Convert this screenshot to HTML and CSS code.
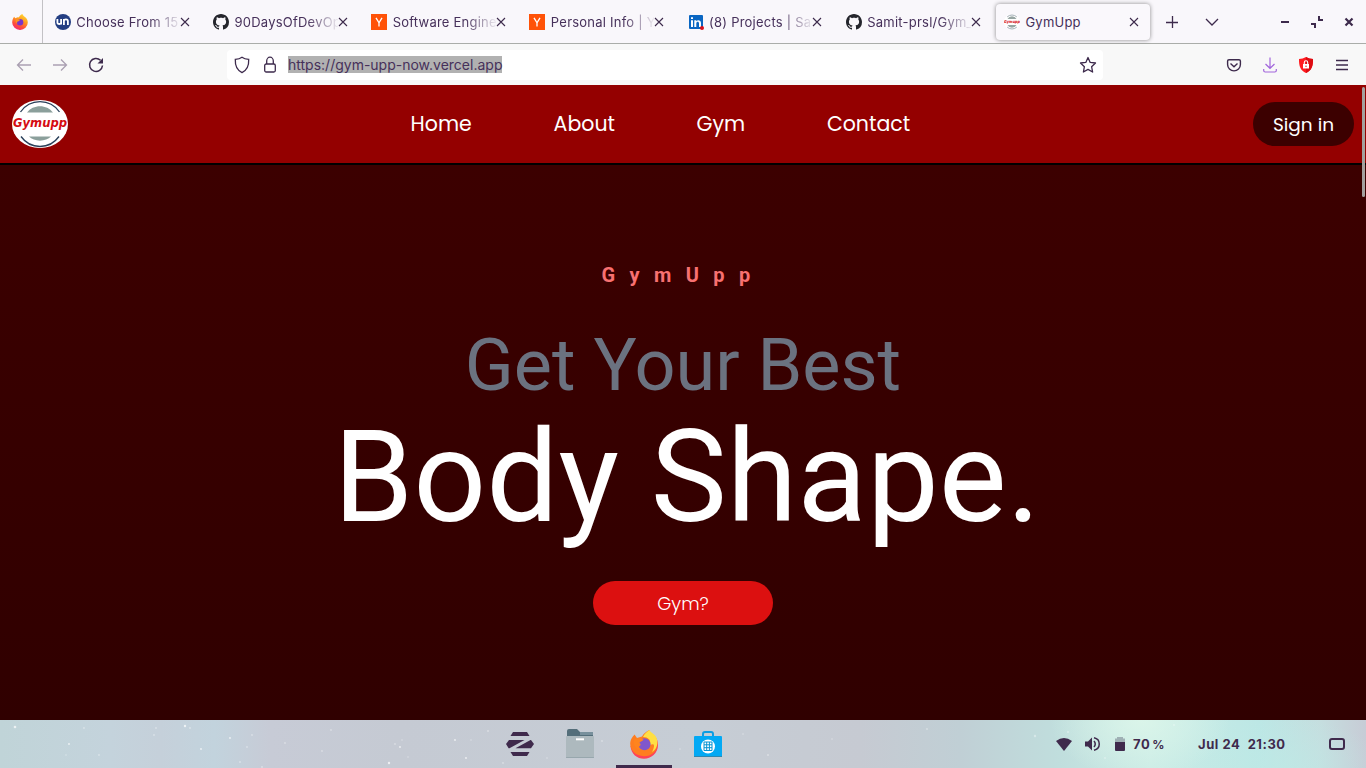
FILE: index.html
```html
<!DOCTYPE html>
<html lang="en">
<head>
<meta charset="utf-8">
<title>GymUpp</title>
<link rel="stylesheet" href="styles.css">
</head>
<body>
<svg class="defs" width="0" height="0">
  <defs>
    <linearGradient id="ff-body" x1=".8" y1="0" x2=".3" y2="1">
      <stop offset="0" stop-color="#ffe03a"/><stop offset=".4" stop-color="#ff9a1e"/><stop offset=".75" stop-color="#ff4a3c"/><stop offset="1" stop-color="#f0277a"/>
    </linearGradient>
    <symbol id="close" viewBox="0 0 10 10"><path d="M1 1l8 8M9 1L1 9" fill="none" stroke="#3d2a4c" stroke-width="1.1"/></symbol>
    <symbol id="github" viewBox="0 0 16 16"><path fill="#24252c" d="M8 0C3.58 0 0 3.58 0 8c0 3.54 2.29 6.53 5.47 7.59.4.07.55-.17.55-.38 0-.19-.01-.82-.01-1.49-2.01.37-2.53-.49-2.69-.94-.09-.23-.48-.94-.82-1.13-.28-.15-.68-.52-.01-.53.63-.01 1.08.58 1.23.82.72 1.21 1.87.87 2.33.66.07-.52.28-.87.51-1.07-1.78-.2-3.64-.89-3.64-3.95 0-.87.31-1.59.82-2.15-.08-.2-.36-1.02.08-2.12 0 0 .67-.21 2.2.82.64-.18 1.32-.27 2-.27s1.36.09 2 .27c1.53-1.04 2.2-.82 2.2-.82.44 1.1.16 1.92.08 2.12.51.56.82 1.27.82 2.15 0 3.07-1.87 3.75-3.65 3.95.29.25.54.73.54 1.48 0 1.07-.01 1.93-.01 2.2 0 .21.15.46.55.38A8.01 8.01 0 0 0 16 8c0-4.42-3.58-8-8-8z"/></symbol>
    <symbol id="ycomb" viewBox="0 0 16 16"><path fill="#ff5207" d="M0 0h16v16H0z"/><path d="M5 3.800L8 8.800l3-5M8 8.600v4" fill="none" stroke="#fff" stroke-width="1.300"/></symbol>
  </defs>
</svg>

<div class="tabbar">
  <div class="pinned">
    <svg width="16" height="16" viewBox="0 0 16 16"><path fill="url(#ff-body)" d="M10.400 0c.4 1.500 1.700 2.200 2.600 3 1.600 1.100 2.800 3.100 2.800 5.400A7.700 7.700 0 0 1 8 16 7.700 7.700 0 0 1 .2 8.400C.2 6 1 4.100 2.300 2.800l.8 1.500 2-.7c.5-.3 1.200-.3 1.700-.2C7.700 1.900 9 .4 10.400 0z"/><circle cx="8" cy="8.200" r="3.300" fill="#7a35c8"/><path d="M3.800 5.300c1.500-.6 2.500.2 4.500.5l-1.600 1.500C5 7.300 4.800 8.500 5.400 9.700 3.800 9 3.300 7 3.800 5.300z" fill="#ff941f"/></svg>
  </div>
  <div class="tab">
    <svg class="fav" viewBox="0 0 16 16"><circle cx="8" cy="8" r="8" fill="#243e82"/><path d="M2.400 5v3.500c0 2 3.700 2 3.700 0V5v5.500M8.900 11V5v2c0-2.300 4-2.300 4 0v4" fill="none" stroke="#fff" stroke-width="1.800"/></svg>
    <span class="title fade">Choose From 15</span><svg class="x"><use href="#close"/></svg>
  </div>
  <div class="tab"><svg class="fav"><use href="#github"/></svg><span class="title fade">90DaysOfDevOps</span><svg class="x"><use href="#close"/></svg></div>
  <div class="tab"><svg class="fav"><use href="#ycomb"/></svg><span class="title fade">Software Engineer</span><svg class="x"><use href="#close"/></svg></div>
  <div class="tab"><svg class="fav"><use href="#ycomb"/></svg><span class="title fade">Personal Info | Y</span><svg class="x"><use href="#close"/></svg></div>
  <div class="tab">
    <svg class="fav" viewBox="0 0 16 16"><rect x="1" y="1" width="14" height="14" rx="1" fill="#0a66c2"/><path d="M3 6.200h2V13H3zM3 3.300h2v1.800H3zM6.300 6.200h2v1C9.500 5.500 13 5.700 13 9v4h-2V9.500c0-2.300-2.700-2.200-2.700 0V13h-2z" fill="#fff"/><circle cx="14" cy="14" r="2" fill="#d8121b"/></svg>
    <span class="title fade">(8) Projects | Sam</span><svg class="x"><use href="#close"/></svg>
  </div>
  <div class="tab"><svg class="fav"><use href="#github"/></svg><span class="title fade">Samit-prsl/Gym_</span><svg class="x"><use href="#close"/></svg></div>
  <div class="tab active">
    <svg class="fav" viewBox="0 0 16 16"><circle cx="8" cy="8" r="8" fill="#fff"/><path d="M3.200 2.900a7 7 0 0 1 9.600 0M3.200 13.100a7 7 0 0 0 9.600 0" fill="none" stroke="#a3adb6"/><path d="M3.500 5a5 5 0 0 1 9 0zM3.500 11a5 5 0 0 0 9 0z" fill="#97a5a3"/><text x="0" y="9.100" font-size="4" textLength="16" lengthAdjust="spacingAndGlyphs" class="logo-text">Gymupp</text></svg>
    <span class="title">GymUpp</span><svg class="x"><use href="#close"/></svg>
  </div>
  <div class="tab-tools">
    <svg width="14" height="14" viewBox="0 0 14 14" class="line"><path d="M7.500 1v12M1 7.500h12"/></svg>
    <svg width="14" height="14" viewBox="0 0 14 14" class="line"><path d="M1 4l6 6 6-6"/></svg>
  </div>
  <div class="window-tools">
    <svg width="10" height="12" viewBox="0 0 10 12"><path d="M1 5h8v2H1z" fill="#3d2a4c"/></svg>
    <svg width="12" height="12" viewBox="0 0 12 12"><path d="M7 0h2v3h3v2H7zM0 7h5v5H3V9H0z" fill="#3d2a4c"/></svg>
    <svg width="10" height="12" viewBox="0 0 10 12"><path d="M1.500 2.500l7 7M8.500 2.500l-7 7" stroke="#3d2a4c" stroke-width="2.200"/></svg>
  </div>
</div>

<div class="toolbar">
  <div class="nav-tools">
    <svg width="16" height="16" viewBox="0 0 16 16" class="line dim"><path d="M15 8H1.500M7 2.500L1.500 8 7 13.500"/></svg>
    <svg width="16" height="16" viewBox="0 0 16 16" class="line dim"><path d="M1 8h13.500M9 2.500L14.500 8 9 13.500"/></svg>
    <svg width="16" height="16" viewBox="0 0 16 16" class="line"><path stroke-width="1.500" d="M12.500 3.200A6.500 6.500 0 1 0 14.500 8.500"/><path d="M15 1v5.500H9.500z" fill="#3d2a4c" stroke="none"/></svg>
  </div>
  <div class="urlbar">
    <svg width="16" height="18" viewBox="0 0 16 18" class="line"><path stroke-width="1.300" d="M8 1.200C6.300 2.500 4 3.200 1.300 3.400 1 9.500 2.500 14 8 16.600 13.500 14 15 9.500 14.700 3.400 12 3.200 9.700 2.500 8 1.200z"/></svg>
    <svg width="14" height="18" viewBox="0 0 14 18" class="line lock"><rect x="1.700" y="8" width="10.600" height="8" rx="1.500" stroke-width="1.300"/><path stroke-width="1.300" d="M3.700 8V5a3.300 3.800 0 0 1 6.600 0v3"/></svg>
    <span class="url">https://gym-upp-now.vercel.app</span>
    <svg width="18" height="18" viewBox="0 0 18 18" class="line star"><path stroke-width="1.300" stroke-linejoin="round" d="M9 1.500l2.200 4.900 5.300.6-3.900 3.700 1 5.300L9 13.400 4.400 16l1-5.300L1.500 7l5.300-.6z"/></svg>
  </div>
  <div class="right-tools">
    <svg width="16" height="16" viewBox="0 0 16 16" class="line"><path stroke-width="1.400" d="M3 2.700h10q1.400 0 1.400 1.400v3.400a6.400 6.400 0 0 1-12.800 0V4.100Q1.600 2.700 3 2.700zM4.500 6.500L8 9.700l3.500-3.200"/></svg>
    <svg width="16" height="16" viewBox="0 0 16 16" class="line purple"><path stroke-width="1.200" d="M8 .500v10.500M3.500 7L8 11.300 12.500 7M1.700 12v1.500q0 1.500 1.500 1.500h9.600q1.500 0 1.500-1.500V12"/></svg>
    <svg width="16" height="16" viewBox="0 0 16 16"><path d="M8 0c2 1.300 4.500 1.800 7 1.900C15.200 9 13.500 13.500 8 16 2.500 13.500.8 9 1 1.900 3.500 1.800 6 1.300 8 0z" fill="#ff1a1f"/><path d="M8 0c2 1.300 4.500 1.800 7 1.900C15.200 9 13.500 13.500 8 16z" fill="#dd0c12"/><path d="M5 7h6v4.500H5z" fill="#fff"/><path d="M6.300 7V5.500a1.700 1.700 0 0 1 3.400 0V7" fill="none" stroke="#fff" stroke-width="1.100"/><circle cx="8" cy="9.200" r=".7" fill="#e00e14"/></svg>
    <svg width="16" height="16" viewBox="0 0 16 16" class="line"><path d="M2 3.500h12M2 8h12M2 12.500h12" stroke-width="1.300"/></svg>
  </div>
</div>

<div class="page">
  <header class="site-header">
    <svg class="logo" width="56" height="48" viewBox="0 0 56 48">
      <ellipse cx="28" cy="24" rx="28" ry="24" fill="#fff"/>
      <path d="M8.500 12C18-1.800 38-1.800 47.500 12M9 36.500c9.500 13.300 28.500 13.300 38 0" fill="none" stroke="#293f59" stroke-width="1.300"/>
      <path d="M15 12.500c6-8.500 20-8.500 26 0zM17 36.500c5 5.500 17 5.500 22 0z" fill="#8b9f9b"/>
      <text x="1" y="27.300" font-size="11.500" textLength="54" lengthAdjust="spacingAndGlyphs" class="logo-text">Gymupp</text>
    </svg>
    <nav class="site-nav"><a class="n1">Home</a><a class="n2">About</a><a class="n3">Gym</a><a class="n4">Contact</a></nav>
    <button class="signin">Sign in</button>
    <div class="scroll-thumb"></div>
  </header>
  <main class="hero">
    <p class="brand">GymUpp</p>
    <h2 class="lead">Get Your Best</h2>
    <h1 class="headline">Body Shape.</h1>
    <button class="cta">Gym?</button>
  </main>
</div>

<footer class="taskbar">
  <svg class="sparkles" width="1366" height="48" viewBox="0 0 1366 48" fill="#fff">
    <g opacity=".7"><circle cx="15" cy="7" r="1.300"/><circle cx="185" cy="6" r="1.200"/><circle cx="69" cy="24" r=".9"/><circle cx="201" cy="29" r=".9"/><circle cx="230" cy="18" r=".9"/><circle cx="400" cy="27" r=".9"/><circle cx="389" cy="43" r="1.200"/><circle cx="455" cy="20" r=".9"/><circle cx="466" cy="38" r=".9"/><circle cx="488" cy="11" r=".7"/></g>
    <g opacity=".35"><circle cx="84" cy="8" r=".9"/><circle cx="99" cy="35" r=".9"/><circle cx="66" cy="35" r=".8"/><circle cx="156" cy="8" r=".9"/><circle cx="190" cy="8" r="1"/><circle cx="154" cy="15" r=".9"/><circle cx="247" cy="27" r=".9"/><circle cx="252" cy="15" r=".9"/><circle cx="240" cy="42" r="1"/><circle cx="262" cy="47" r="1"/><circle cx="285" cy="23" r=".9"/><circle cx="322" cy="31" r=".9"/><circle cx="331" cy="10" r=".9"/><circle cx="395" cy="24" r=".9"/><circle cx="402" cy="20" r=".8"/><circle cx="408" cy="37" r=".8"/><circle cx="471" cy="20" r=".8"/><circle cx="503" cy="43" r=".9"/><circle cx="547" cy="38" r=".8"/><circle cx="602" cy="21" r=".9"/><circle cx="680" cy="29" r=".8"/><circle cx="743" cy="14" r=".8"/><circle cx="768" cy="35" r="1"/><circle cx="832" cy="19" r=".8"/><circle cx="927" cy="9" r=".9"/><circle cx="1035" cy="16" r="1.200"/><circle cx="1068" cy="12" r="1"/><circle cx="1174" cy="5" r=".9"/><circle cx="1105" cy="38" r=".9"/></g>
  </svg>
  <div class="launcher">
    <div class="app"><svg width="28" height="24" viewBox="0 0 28 24"><path fill="#3f2a4c" d="M7 0h14l2.500 4h-19zM4.500 20h19L21 24H7zM3 8h15.500L3.500 16.200H2.600L0 12zM25 8l3 4-3 4.200H9.500L24.500 8z"/></svg></div>
    <div class="app"><svg width="28" height="30" viewBox="0 0 28 30"><path d="M1 2q0-2 2-2h8l3 3h13v6H1z" fill="#546e7a"/><path d="M14 3h13v3H14z" fill="#78909c"/><rect y="7" width="28" height="22" rx="1" fill="#adb9be"/><rect y="28.300" width="28" height=".7" fill="#8fa0a7"/><rect x="10" y="9.300" width="8" height="2" fill="#fff"/></svg></div>
    <div class="app running"><svg width="28" height="29" viewBox="0 0 28 29"><path d="M.5 16C1 24 7 28.800 14 28.800S28 23 28 15c0-4-1-6-3-8z" fill="#ff4258"/><path d="M4.500 4.500L7 8l5-1.500C14 3 16 2 19.500 0c0 4 6 6 7.500 12 1.500 8-4.500 14.200-13 14.200S0 20 .2 13.500C.5 9 2.500 7 4.500 4.500z" fill="#ff7d20"/><path d="M19.500 0c-3 2-5.500 4-6.500 7 7 0 8 5 7 8 6-3 4 3 2 7 6-3 7.500-13 2-17.500C22 2.500 20 2 19.500 0z" fill="#ffdf43"/><circle cx="14.500" cy="14.300" r="6" fill="#8057cc"/><path d="M4.500 9c3-1.500 6-.5 9 .5 0 1.500-4 2-4 3.500 2 1 1 3-1 4l2 3C5 19 2.500 13 4.500 9z" fill="#ff841e"/></svg></div>
    <div class="app"><svg width="28" height="27" viewBox="0 0 28 27"><path d="M9 6V3q0-2 2-2h6q2 0 2 2v3" fill="none" stroke="#0c9de2" stroke-width="2"/><rect y="5" width="28" height="21" rx="1" fill="#03a9f4"/><rect y="25" width="28" height="1" fill="#2f88b0"/><circle cx="14" cy="15.500" r="7" fill="#fff"/><path d="M10 11h8v8.500h-8zM10 13.800h8M10 16.700h8M12.700 11v8.500M15.400 11v8.500" fill="none" stroke="#0794d3"/></svg></div>
  </div>
  <div class="status">
    <svg width="16" height="13" viewBox="0 0 16 13"><path d="M0 3Q8-3 16 3L8 13z" fill="#3f2a4c"/></svg>
    <svg class="vol" width="16" height="14" viewBox="0 0 16 14"><path d="M0 4.500h3L7 .5v13l-4-4H0z" fill="#3f2a4c"/><path d="M9 4q2.500 3 0 6M9 .8c7 1.500 7 10.900 0 12.400" fill="none" stroke="#3f2a4c" stroke-width="1.500"/></svg>
    <svg class="bat" width="10" height="14" viewBox="0 0 10 14"><path d="M2 0h6v1.500h2V5H0V1.500h2z" fill="#9fb0b4"/><path d="M0 5h10v8q0 1-1 1H1q-1 0-1-1z" fill="#3f2a4c"/></svg>
    <span class="pct">70<i>%</i></span>
    <span class="clock">Jul 24&nbsp; 21:30</span>
    <svg class="desk" width="16" height="12" viewBox="0 0 16 12"><rect x="1" y="1" width="14" height="10" rx="2" fill="none" stroke="#3f2a4c" stroke-width="2"/></svg>
  </div>
</footer>
</body>
</html>
```
FILE: styles.css
```css
* { box-sizing: border-box; }
html, body { margin: 0; height: 100%; overflow: hidden; }
body { width: 1366px; height: 768px; display: flex; flex-direction: column; font-family: Inter, "Open Sans", sans-serif; color: #46305a; }
svg { display: block; flex: none; }
.defs { position: absolute; }
button { border: 0; padding: 0; }
.line { fill: none; stroke: #3d2a4c; stroke-width: 1.3; }
.dim { stroke: #aaa0b2; }
.purple { stroke: #a266dc; }
.logo-text { font-family: "DejaVu Sans", sans-serif; font-weight: 700; font-style: italic; fill: #d50b12; }

.tabbar { height: 44px; flex: none; display: flex; background: #f9f7fb; border-bottom: 1px solid #aaada9; }
.pinned { width: 43px; padding: 14px 0 0 12px; border-right: 1px solid #c3c1c5; }
.tab { width: 154.200px; height: 36px; margin: 4px 2px 0; padding: 0 11.300px 0 8px; display: flex; align-items: center; flex: none; border-radius: 4px; }
.pinned + .tab { margin-left: 3.800px; }
.tab.active { background: #faf8fc; box-shadow: 0 0 4px rgba(0, 0, 0, .45); }
.fav { width: 16px; height: 16px; margin-right: 5.500px; }
.title { flex: 1; min-width: 0; overflow: hidden; white-space: nowrap; font-size: 13px; letter-spacing: .230px; line-height: 20px; }
.fade { -webkit-mask-image: linear-gradient(90deg, #000 70%, transparent 102%); mask-image: linear-gradient(90deg, #000 70%, transparent 102%); }
.x { width: 10px; height: 10px; }
.tab-tools { display: flex; gap: 26px; padding: 15px 0 0 12.600px; }
.window-tools { display: flex; gap: 21px; margin-left: auto; padding: 16px 12px 0 0; }

.toolbar { height: 41px; flex: none; display: flex; align-items: center; background: #f8f8f8; }
.nav-tools { width: 227px; padding-left: 16px; display: flex; gap: 20px; }
.urlbar { width: 876px; height: 30px; padding: 0 6px 0 7px; display: flex; align-items: center; background: #fff; border-radius: 4px; }
.lock { margin-left: 13px; }
.url { margin-left: 11px; height: 17px; line-height: 18px; font-size: 14px; background: #b1b1b1; }
.star { margin-left: auto; }
.right-tools { margin-left: auto; padding-right: 16px; display: flex; gap: 20px; }

.page { height: 635px; flex: none; display: flex; flex-direction: column; }
.site-header { position: relative; height: 80px; flex: none; padding: 0 12px; display: flex; align-items: center; background: #940000; border-bottom: 2px solid #000; font-family: Poppins, Inter, sans-serif; }
.site-nav { display: flex; margin-left: 342.600px; color: #fff; font-size: 20.500px; line-height: 30px; }
.site-nav a { white-space: nowrap; }
.n1 { width: 143px; }
.n2 { width: 143px; }
.n3 { width: 130.300px; }
.signin { width: 101px; height: 44px; margin-left: auto; border-radius: 22px; background: #3c0000; color: #fff; font: 18.500px Poppins, Inter, sans-serif; }
.scroll-thumb { position: absolute; right: 1px; top: 2px; width: 3px; height: 110px; border-radius: 2px; background: #a4a0a0; z-index: 2; }
.hero { flex: 1; display: flex; flex-direction: column; align-items: center; background: linear-gradient(#3c0000, #300000); font-family: Roboto, sans-serif; }
.brand { margin: 96px 0 0; font-size: 20px; line-height: 28px; font-weight: 700; letter-spacing: 14.400px; color: #f87171; }
.lead { margin: 41px 0 0; font-size: 72px; line-height: 72px; font-weight: 400; color: #6b7280; white-space: nowrap; }
.headline { margin: 11px 0 0; padding-left: 8px; font-size: 128px; line-height: 128px; font-weight: 400; color: #fff; white-space: nowrap; }
.cta { width: 180px; height: 44px; margin-top: 40px; border-radius: 22px; background: #dc1010; color: #fff; font: 300 18px Poppins, Inter, sans-serif; }

.taskbar { position: relative; height: 48px; flex: none; display: flex; color: #3f2a4c; background: radial-gradient(ellipse 90px 60px at 1140px 0, rgba(220, 246, 234, .9), transparent), radial-gradient(ellipse 100px 50px at 1285px 48px, rgba(190, 234, 230, .6), transparent), linear-gradient(90deg, #c0d4d8 0, #c4d3dc 110px, #c5d0da 160px, #c2d3dd 215px, #c7cbd6 270px, #c5cad3 400px, #c6cdd5 700px, #c6cad2 860px, #c0cfd5 960px, #c0dedd 1060px, #cbece6 1150px, #bce7e5 1260px, #c5dedf 1320px, #c7ccd6 1366px); }
.sparkles { position: absolute; inset: 0; }
.launcher { display: flex; gap: 8px; margin-left: 492px; position: relative; }
.app { width: 56px; display: flex; align-items: center; justify-content: center; }
.app:nth-child(2) { margin-left: -4px; }
.running { box-shadow: inset 0 -3px #3f2a4c; }
.status { position: relative; margin-left: auto; padding-right: 21px; display: flex; align-items: center; font-size: 13px; font-weight: 700; letter-spacing: .550px; white-space: nowrap; }
.vol { margin-left: 13px; }
.bat { margin-left: 14px; }
.pct { width: 65px; margin-left: 8px; }
.pct i { margin-left: 2px; font-style: normal; font-size: 12px; }
.clock { width: 131px; }
```
